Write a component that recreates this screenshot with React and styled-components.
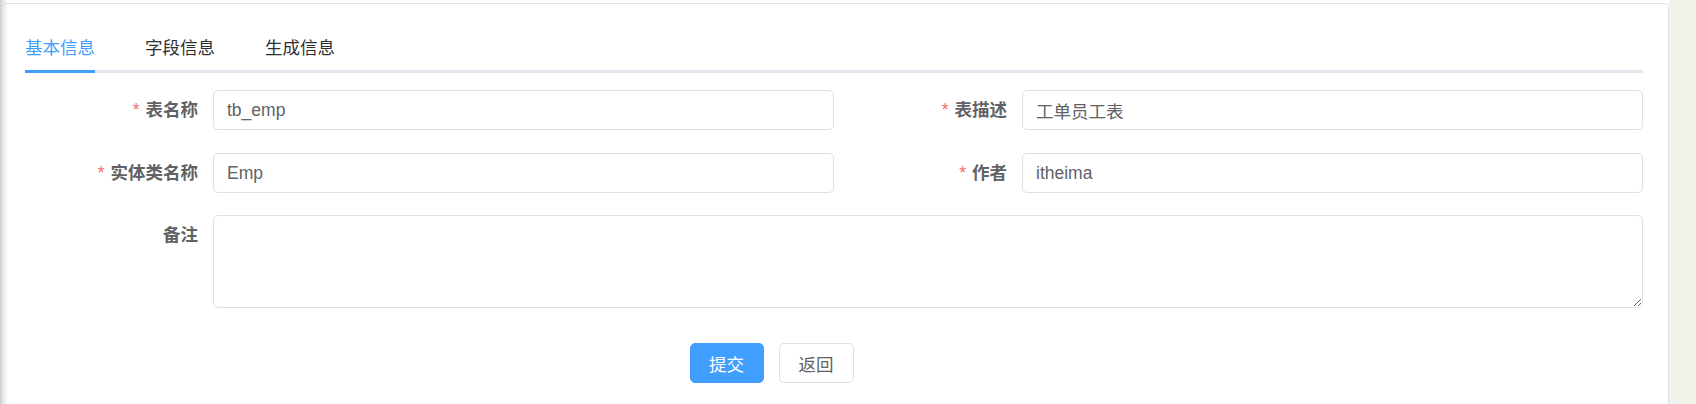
import React, { useState } from "react";
import styled, { createGlobalStyle } from "styled-components";

const GlobalStyle = createGlobalStyle`
  html, body {
    margin: 0;
    padding: 0;
    height: 404px;
    overflow: hidden;
    background: #f1f2ea;
  }
  body {
    font-family: "Liberation Sans", "Noto Sans CJK SC", sans-serif;
  }
  * {
    box-sizing: border-box;
  }
`;

const Page = styled.div`
  display: flex;
  height: 404px;
`;

const Main = styled.div`
  flex: 1;
  padding-top: 3px;
  background: linear-gradient(to right, #c9cbd0 0, #e6e7ea 3px, #fff 8px);
`;

const Strip = styled.div`
  width: 27px;
  background: #f1f2ea;
`;

const Card = styled.div`
  height: 100%;
  border-top: 1px solid #dfe1e8;
  border-right: 1px solid #dfe1e8;
  border-radius: 0 5px 0 0;
  padding: 19px 25px 0 25px;
`;

const TabBar = styled.div`
  display: flex;
  gap: 50px;
  box-shadow: inset 0 -3px 0 #e4e7ed;
  margin-bottom: 17px;
`;

const Tab = styled.div`
  height: 50px;
  line-height: 50px;
  font-size: 17.5px;
  color: ${(p) => (p.$active ? "#409eff" : "#303133")};
  box-shadow: ${(p) => (p.$active ? "inset 0 -3px 0 #409eff" : "none")};
  cursor: pointer;
`;

const FormGrid = styled.div`
  display: grid;
  grid-template-columns: 1fr 1fr;
  row-gap: 23px;
`;

const Item = styled.div`
  display: flex;
  grid-column: ${(p) => (p.$wide ? "1 / span 2" : "auto")};
  margin-top: ${(p) => (p.$wide ? "-1px" : "0")};
`;

const Label = styled.label`
  width: 188px;
  flex-shrink: 0;
  padding-right: 15px;
  text-align: right;
  line-height: 40px;
  font-size: 17.5px;
  font-weight: 700;
  color: #606266;
`;

const Star = styled.span`
  color: #f56c6c;
  font-weight: 400;
  margin-right: 6px;
`;

const Input = styled.input`
  flex: 1;
  min-width: 0;
  height: 40px;
  padding: 0 13px;
  border: 1px solid #dcdfe6;
  border-radius: 5px;
  font-family: inherit;
  font-size: 17.5px;
  color: #606266;
  outline: none;
  background: #fff;
`;

const TextArea = styled.textarea`
  flex: 1;
  height: 93px;
  padding: 6px 13px;
  border: 1px solid #dcdfe6;
  border-radius: 5px;
  font-family: inherit;
  font-size: 17.5px;
  color: #606266;
  outline: none;
  resize: vertical;
`;

const Actions = styled.div`
  display: flex;
  justify-content: center;
  gap: 15px;
  padding-right: 125px;
  margin-top: 35px;
`;

const Button = styled.button`
  width: ${(p) => (p.$primary ? "74px" : "75px")};
  height: 40px;
  border-radius: 5px;
  font-family: inherit;
  font-size: 17.5px;
  cursor: pointer;
  border: 1px solid ${(p) => (p.$primary ? "#409eff" : "#dcdfe6")};
  background: ${(p) => (p.$primary ? "#409eff" : "#fff")};
  color: ${(p) => (p.$primary ? "#fff" : "#606266")};
`;

const tabs = ["基本信息", "字段信息", "生成信息"];

const Field = ({ label, required, value }) => (
  <Item>
    <Label>
      {required && <Star>*</Star>}
      {label}
    </Label>
    <Input defaultValue={value} />
  </Item>
);

export default function App() {
  const [active, setActive] = useState(0);
  return (
    <>
      <GlobalStyle />
      <Page>
        <Main>
          <Card>
            <TabBar>
              {tabs.map((t, i) => (
                <Tab key={t} $active={i === active} onClick={() => setActive(i)}>
                  {t}
                </Tab>
              ))}
            </TabBar>
            <FormGrid>
              <Field label="表名称" required value="tb_emp" />
              <Field label="表描述" required value="工单员工表" />
              <Field label="实体类名称" required value="Emp" />
              <Field label="作者" required value="itheima" />
              <Item $wide>
                <Label>备注</Label>
                <TextArea />
              </Item>
            </FormGrid>
            <Actions>
              <Button $primary>提交</Button>
              <Button>返回</Button>
            </Actions>
          </Card>
        </Main>
        <Strip />
      </Page>
    </>
  );
}
